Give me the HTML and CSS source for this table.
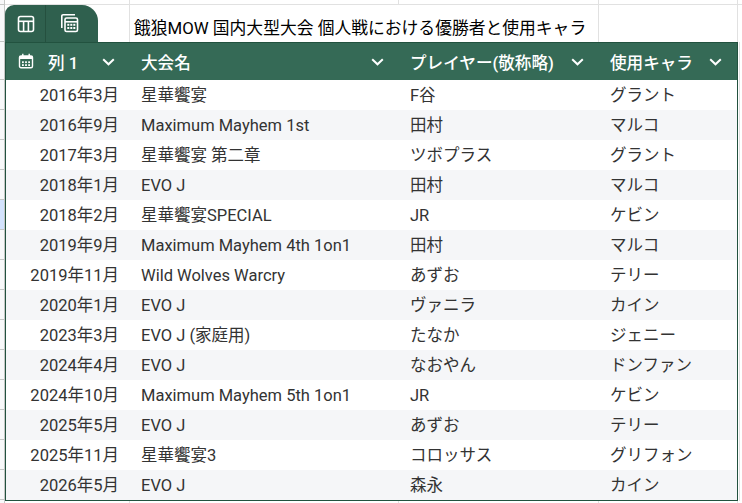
FILE: index.html
```html
<!DOCTYPE html>
<html lang="ja">
<head>
<meta charset="utf-8">
<title>餓狼MOW 国内大型大会</title>
<link rel="stylesheet" href="styles.css">
</head>
<body>
<div class="page">
  <div class="gutter">
    <div class="g g-top"></div>
    <div class="g g-title"></div>
    <div class="g g-head"></div>
    <div class="g"></div><div class="g"></div><div class="g"></div><div class="g"></div>
    <div class="g g-sel"></div>
    <div class="g"></div><div class="g"></div><div class="g"></div><div class="g"></div><div class="g"></div>
    <div class="g"></div><div class="g"></div><div class="g"></div><div class="g"></div>
    <div class="g g-rest"></div>
  </div>
  <div class="main">
    <div class="gridrow top-strip">
      <div class="gc"></div><div class="gc"></div><div class="gc"></div><div class="gc"></div><div class="gc"></div>
    </div>
    <div class="gridrow title-row">
      <div class="gc cell-a">
        <div class="tab">
          <span class="tab-btn">
            <svg width="18" height="18" viewBox="0 0 18 18"><rect x="1.5" y="1.5" width="15" height="15" rx="2" fill="none" stroke="#fff" stroke-width="1.6"/><line x1="1.5" y1="6.3" x2="16.5" y2="6.3" stroke="#fff" stroke-width="1.6"/><line x1="6.6" y1="6.3" x2="6.6" y2="16.5" stroke="#fff" stroke-width="1.6"/><line x1="11.4" y1="6.3" x2="11.4" y2="16.5" stroke="#fff" stroke-width="1.6"/></svg>
          </span>
          <span class="tab-btn tab-btn2">
            <svg width="19" height="20" viewBox="0 0 19 20"><path d="M1.8 15 V3 A1.3 1.3 0 0 1 3.1 1.7 H15" fill="none" stroke="#fff" stroke-width="1.6"/><rect x="5" y="5" width="12.5" height="13.5" rx="1.6" fill="none" stroke="#fff" stroke-width="1.6"/><line x1="5" y1="8.8" x2="17.5" y2="8.8" stroke="#fff" stroke-width="1.6"/><rect x="7.3" y="10.8" width="2" height="2" fill="#fff"/><rect x="10.3" y="10.8" width="2" height="2" fill="#fff"/><rect x="13.3" y="10.8" width="2" height="2" fill="#fff"/><rect x="7.3" y="14" width="2" height="2" fill="#fff"/><rect x="10.3" y="14" width="2" height="2" fill="#fff"/><rect x="13.3" y="14" width="2" height="2" fill="#fff"/></svg>
          </span>
        </div>
      </div>
      <div class="gc cell-title"><span class="title">餓狼MOW 国内大型大会 個人戦における優勝者と使用キャラ</span></div>
      <div class="gc"></div>
      <div class="gc"></div>
    </div>
    <div class="table-wrap">
      <div class="table">
        <div class="row head">
          <div class="hc hc-first">
            <svg class="cal" width="16" height="16" viewBox="0 0 16 16"><rect x="1.5" y="3" width="13" height="11.8" rx="1.5" fill="none" stroke="#fff" stroke-width="1.4"/><rect x="1.5" y="3" width="13" height="3" fill="#fff"/><line x1="4.8" y1="0.8" x2="4.8" y2="3.5" stroke="#fff" stroke-width="1.4"/><line x1="11.2" y1="0.8" x2="11.2" y2="3.5" stroke="#fff" stroke-width="1.4"/><rect x="4" y="8.3" width="1.8" height="1.8" fill="#fff"/><rect x="7.1" y="8.3" width="1.8" height="1.8" fill="#fff"/><rect x="10.2" y="8.3" width="1.8" height="1.8" fill="#fff"/><rect x="4" y="11.2" width="1.8" height="1.8" fill="#fff"/><rect x="7.1" y="11.2" width="1.8" height="1.8" fill="#fff"/><rect x="10.2" y="11.2" width="1.8" height="1.8" fill="#fff"/></svg>
            <span class="hlabel">列 1</span>
            <svg class="chev" width="13" height="8" viewBox="0 0 13 8"><polyline points="1.2,1.2 6.5,6.3 11.8,1.2" fill="none" stroke="#fff" stroke-width="2"/></svg>
          </div>
          <div class="hc"><span class="hlabel">大会名</span><svg class="chev" width="13" height="8" viewBox="0 0 13 8"><polyline points="1.2,1.2 6.5,6.3 11.8,1.2" fill="none" stroke="#fff" stroke-width="2"/></svg></div>
          <div class="hc"><span class="hlabel">プレイヤー(敬称略)</span><svg class="chev" width="13" height="8" viewBox="0 0 13 8"><polyline points="1.2,1.2 6.5,6.3 11.8,1.2" fill="none" stroke="#fff" stroke-width="2"/></svg></div>
          <div class="hc"><span class="hlabel">使用キャラ</span><svg class="chev" width="13" height="8" viewBox="0 0 13 8"><polyline points="1.2,1.2 6.5,6.3 11.8,1.2" fill="none" stroke="#fff" stroke-width="2"/></svg></div>
        </div>
        <div class="row"><div class="c date">2016年3月</div><div class="c">星華饗宴</div><div class="c">F谷</div><div class="c">グラント</div></div>
        <div class="row alt"><div class="c date">2016年9月</div><div class="c">Maximum Mayhem 1st</div><div class="c">田村</div><div class="c">マルコ</div></div>
        <div class="row"><div class="c date">2017年3月</div><div class="c">星華饗宴 第二章</div><div class="c">ツボプラス</div><div class="c">グラント</div></div>
        <div class="row alt"><div class="c date">2018年1月</div><div class="c">EVO J</div><div class="c">田村</div><div class="c">マルコ</div></div>
        <div class="row"><div class="c date">2018年2月</div><div class="c">星華饗宴SPECIAL</div><div class="c">JR</div><div class="c">ケビン</div></div>
        <div class="row alt"><div class="c date">2019年9月</div><div class="c">Maximum Mayhem 4th 1on1</div><div class="c">田村</div><div class="c">マルコ</div></div>
        <div class="row"><div class="c date">2019年11月</div><div class="c">Wild Wolves Warcry</div><div class="c">あずお</div><div class="c">テリー</div></div>
        <div class="row alt"><div class="c date">2020年1月</div><div class="c">EVO J</div><div class="c">ヴァニラ</div><div class="c">カイン</div></div>
        <div class="row"><div class="c date">2023年3月</div><div class="c">EVO J (家庭用)</div><div class="c">たなか</div><div class="c">ジェニー</div></div>
        <div class="row alt"><div class="c date">2024年4月</div><div class="c">EVO J</div><div class="c">なおやん</div><div class="c">ドンファン</div></div>
        <div class="row"><div class="c date">2024年10月</div><div class="c">Maximum Mayhem 5th 1on1</div><div class="c">JR</div><div class="c">ケビン</div></div>
        <div class="row alt"><div class="c date">2025年5月</div><div class="c">EVO J</div><div class="c">あずお</div><div class="c">テリー</div></div>
        <div class="row"><div class="c date">2025年11月</div><div class="c">星華饗宴3</div><div class="c">コロッサス</div><div class="c">グリフォン</div></div>
        <div class="row alt"><div class="c date">2026年5月</div><div class="c">EVO J</div><div class="c">森永</div><div class="c">カイン</div></div>
      </div>
      <div class="filler"></div>
    </div>
    <div class="gridrow below">
      <div class="gc"></div><div class="gc"></div><div class="gc"></div><div class="gc"></div><div class="gc"></div>
    </div>
  </div>
</div>
</body>
</html>
```
FILE: styles.css
```css
* { box-sizing: border-box; }
html, body { margin: 0; padding: 0; background: #fff; }
body {
  width: 742px;
  height: 503px;
  overflow: hidden;
  font-family: "Roboto", "Noto Sans CJK JP", sans-serif;
  color: #333;
}
.page { display: flex; align-items: flex-start; }

.gutter { width: 5px; flex: none; display: flex; flex-direction: column; }
.g {
  height: 30px;
  background: #f8f9fa;
  border-right: 1px solid #c4c7c5;
  border-bottom: 1px solid #c4c7c5;
}
.g-top { height: 5px; }
.g-title { height: 37px; }
.g-head { height: 38px; }
.g-sel { background: #d3e3fd; }
.g-rest { height: 20px; border-bottom: none; }

.main { flex: 1; display: flex; flex-direction: column; }

.gridrow {
  display: grid;
  grid-template-columns: 125px 269px 200px 139px 1fr;
}
.gc { border-right: 1px solid #e1e1e1; }
.gc:last-child { border-right: none; }
.top-strip { height: 5px; border-bottom: 1px solid #e1e1e1; }
.title-row { height: 37px; grid-template-columns: 125px 469px 139px 1fr; }
.below { height: 10px; }

.cell-a { border-right: 1px solid #e1e1e1; }
.tab {
  display: flex;
  width: 93px;
  height: 37px;
  background: #2f604e;
  border-radius: 9px 16px 0 0;
}
.tab-btn {
  width: 41px;
  display: flex;
  align-items: center;
  justify-content: center;
  padding-left: 1px;
  border-right: 1px solid #25503f;
}
.tab-btn2 { border-right: none; width: 52px; justify-content: flex-start; padding-left: 14px; padding-bottom: 2px; }

.cell-title {
  display: flex;
  align-items: flex-end;
  padding: 0 0 4px 4px;
}
.title {
  font-size: 16.8px;
  color: #000;
  white-space: nowrap;
  line-height: 20px;
}

.table-wrap { display: flex; }
.table {
  width: 733px;
  flex: none;
  border: 1px solid #22523f;
}
.filler { flex: 1; border-left: 1px solid #e1e1e1; margin-left: 1px; }

.row {
  display: grid;
  grid-template-columns: 124px 269px 200px 138px;
  height: 30px;
  background: #fff;
}
.row.alt { background: #f5f6f8; }
.row.head { height: 37px; background: #356a56; color: #fff; }

.hc {
  display: flex;
  align-items: center;
  padding: 0 15px 0 11px;
  font-size: 16.6px;
  font-weight: 500;
  white-space: nowrap;
}
.hc .hlabel { flex: 1; }
.hc-first { padding-left: 12px; }
.hc-first .cal { margin-right: 14px; margin-top: -1px; }
.chev { flex: none; }

.c {
  display: flex;
  align-items: center;
  padding: 1px 11px 0;
  font-size: 16.5px;
  line-height: 20px;
  white-space: nowrap;
  color: #333;
}
.c.date { justify-content: flex-end; }
```
